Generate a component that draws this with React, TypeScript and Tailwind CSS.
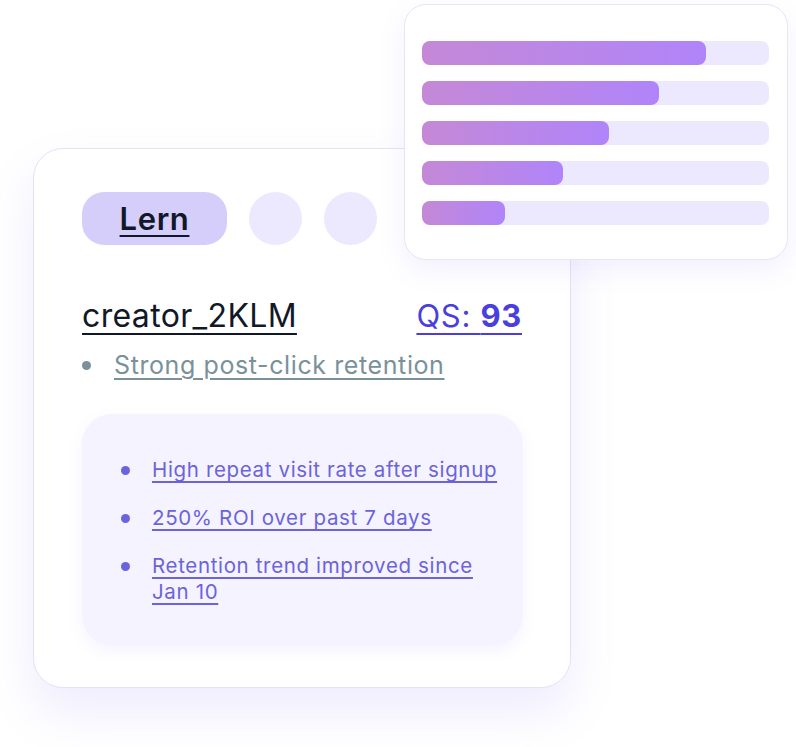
import React from "react";

const bars = [284, 237, 187, 141, 83];

const items = [
  "High repeat visit rate after signup",
  "250% ROI over past 7 days",
  "Retention trend improved since Jan 10",
];

export default function App() {
  return (
    <div
      className="relative w-[796px] h-[747px] bg-white overflow-hidden"
      style={{ fontFamily: "Inter, 'Noto Sans', sans-serif" }}
    >
      <div className="pt-[148px] pl-[33px]">
        <div className="w-[538px] h-[540px] rounded-[30px] border border-[#e5e1fb] bg-white shadow-[0_24px_48px_rgba(124,108,240,0.13)] pt-[43px] pl-[48px] pr-[48px]">
          <div className="flex items-center gap-[22px]">
            <div className="w-[145px] h-[53px] rounded-[22px] bg-[#d5cefb] flex items-center justify-center">
              <span className="text-[31px] font-semibold tracking-[0.6px] text-[#111827] underline underline-offset-[5px] decoration-2 leading-none">
                Lern
              </span>
            </div>
            <div className="w-[53px] h-[53px] rounded-full bg-[#ece9fe]" />
            <div className="w-[53px] h-[53px] rounded-full bg-[#ece9fe]" />
          </div>
          <div className="mt-[51px] flex items-baseline justify-between">
            <span className="text-[32px] leading-[39px] tracking-[0.35px] text-[#111827] underline underline-offset-[6px] decoration-2">
              creator_2KLM
            </span>
            <span className="text-[31px] leading-[39px] tracking-[0.7px] text-[#4a3fdc] underline underline-offset-[6px] decoration-2">
              QS: <span className="font-bold">93</span>
            </span>
          </div>
          <div className="mt-[16px] flex items-center">
            <span className="w-[9px] h-[9px] shrink-0 rounded-full bg-[#7a919b] mr-[23px]" />
            <span className="text-[25px] leading-[29px] tracking-[0.6px] text-[#7a919b] underline underline-offset-[4px] decoration-[1.5px]">
              Strong post-click retention
            </span>
          </div>
          <div className="mt-[34px] w-[441px] h-[231px] rounded-[30px] bg-[#f5f3ff] shadow-[0_6px_16px_rgba(124,108,240,0.08)] pt-[43px] pl-[39px] pr-[24px]">
            <ul className="flex flex-col gap-[22px]">
              {items.map((t) => (
                <li key={t} className="flex items-start">
                  <span className="mt-[9px] w-[9px] h-[9px] shrink-0 rounded-full bg-[#6b63dd] mr-[22px]" />
                  <span className="text-[20.5px] leading-[26px] tracking-[0.65px] text-[#6b63dd] underline underline-offset-[4px] decoration-[1.5px]">
                    {t}
                  </span>
                </li>
              ))}
            </ul>
          </div>
        </div>
      </div>

      <div className="absolute left-[404px] top-[4px] w-[384px] h-[256px] rounded-[22px] border border-[#e7e4fb] bg-white shadow-[0_10px_28px_rgba(124,108,240,0.1)] pt-[36px] pl-[17px] pr-[18px]">
        <div className="flex flex-col gap-[16px]">
          {bars.map((w, i) => (
            <div key={i} className="h-[24px] rounded-[8px] bg-[#ece9fe]">
              <div
                className="h-full rounded-[8px] bg-gradient-to-r from-[#c488d6] to-[#b084f9]"
                style={{ width: w }}
              />
            </div>
          ))}
        </div>
      </div>
    </div>
  );
}
